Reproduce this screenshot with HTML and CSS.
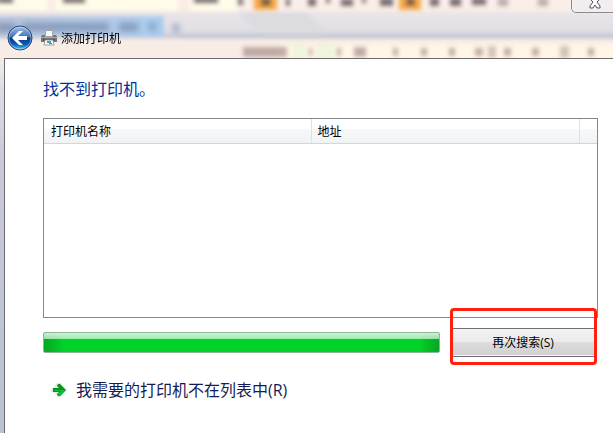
FILE: index.html
```
<!DOCTYPE html>
<html lang="zh-CN">
<head>
    <meta charset="UTF-8">
    <title>添加打印机</title>
    <link rel="stylesheet" href="styles.css">
</head>
<body>
    <div class="window">
        <!-- blurred desktop behind the glass frame -->
        <svg class="glass" viewBox="0 0 613 58" preserveAspectRatio="none" aria-hidden="true">
            <defs>
                <filter id="soft" x="-5%" y="-40%" width="110%" height="180%"><feGaussianBlur stdDeviation="2"/></filter>
                <filter id="softer" x="-5%" y="-60%" width="110%" height="220%"><feGaussianBlur stdDeviation="3"/></filter>
                <linearGradient id="band" x1="0" y1="0" x2="0" y2="1">
                    <stop offset="0" stop-color="#e9e4e6"/>
                    <stop offset="0.75" stop-color="#e1dfe6"/>
                    <stop offset="1" stop-color="#b7becb"/>
                </linearGradient>
                <linearGradient id="tab" x1="0" y1="0" x2="1" y2="0">
                    <stop offset="0" stop-color="#b9c6dc"/>
                    <stop offset="0.6" stop-color="#b4cbe6"/>
                    <stop offset="1" stop-color="#a8cdef"/>
                </linearGradient>
            </defs>
            <rect width="613" height="58" fill="#f8ece6"/>
            <g filter="url(#soft)">
                <rect x="-10" y="-10" width="640" height="21" fill="#faeee8"/>
                <rect x="-10" y="-8" width="57" height="19" fill="#fffbe9"/>
                <rect x="56" y="-8" width="122" height="19" fill="#fffce9"/>
                <rect x="190" y="-8" width="48" height="19" fill="#fffbe9"/>
                <rect x="-10" y="12" width="640" height="26" fill="url(#band)"/>
                <path d="M238 12h68l24 24h-68z" fill="#dcdbe0"/>
                <rect x="-10" y="16" width="174" height="21" fill="url(#tab)"/>
                <rect x="180" y="35" width="440" height="3" fill="#b2bbca"/>
                <rect x="280" y="44" width="345" height="16" fill="#fff6e6"/>
                <rect x="292" y="44" width="14" height="14" fill="#eef5dc"/>
                <rect x="316" y="44" width="18" height="14" fill="#eef5dc"/>
            </g>
            <g filter="url(#softer)" fill="#6f83a8" opacity="0.7">
                <rect x="-4" y="23" width="20" height="9"/>
                <rect x="22" y="23" width="87" height="8"/>
                <rect x="119" y="23" width="19" height="8"/>
                <rect x="149" y="23" width="7" height="7"/>
                <rect x="173" y="24" width="6" height="8"/>
            </g>
            <g filter="url(#soft)">
                <rect x="254" y="-6" width="23" height="16" fill="#f6a947"/>
                <rect x="399" y="-6" width="22" height="16" fill="#f6a947"/>
                <g fill="#50484c" opacity="0.75">
                    <rect x="-2" y="-3" width="15" height="6"/>
                    <rect x="63" y="-3" width="22" height="6"/>
                    <rect x="194" y="-3" width="24" height="6"/>
                    <rect x="238" y="-2" width="5" height="7"/>
                    <rect x="261" y="-2" width="10" height="8"/>
                    <rect x="286" y="-2" width="4" height="8"/>
                    <rect x="308" y="-2" width="8" height="8"/>
                    <rect x="326" y="-2" width="4" height="5"/>
                    <rect x="341" y="-1" width="12" height="7"/>
                    <rect x="362" y="-2" width="4" height="5"/>
                    <rect x="380" y="-2" width="13" height="8"/>
                    <rect x="406" y="-2" width="9" height="8"/>
                    <rect x="430" y="-2" width="9" height="8"/>
                    <rect x="450" y="-2" width="11" height="8"/>
                    <rect x="472" y="-2" width="14" height="7"/>
                    <rect x="498" y="-2" width="10" height="8" opacity="0.5"/>
                    <rect x="538" y="-2" width="10" height="8" opacity="0.5"/>
                </g>
                <g fill="#a88e8a" opacity="0.7">
                    <rect x="243" y="47" width="44" height="10"/>
                    <rect x="354" y="47" width="12" height="10"/>
                    <rect x="309" y="48" width="3" height="8"/>
                    <rect x="337" y="48" width="4" height="8"/>
                    <rect x="393" y="48" width="5" height="8"/>
                    <rect x="421" y="48" width="6" height="8"/>
                    <rect x="449" y="48" width="6" height="8"/>
                    <rect x="475" y="48" width="8" height="8"/>
                    <rect x="488" y="46" width="8" height="12" opacity="0.7"/>
                    <rect x="504" y="48" width="7" height="8"/>
                    <rect x="532" y="48" width="7" height="8"/>
                    <rect x="560" y="46" width="9" height="12" opacity="0.7"/>
                    <rect x="588" y="48" width="6" height="8"/>
                </g>
            </g>
        </svg>
        <button class="close" type="button" aria-label="关闭">
            <svg width="14" height="14" viewBox="0 0 14 14">
                <path d="M2 1h3l2 3 2-3h3v2L9 6l3 4v2H9L7 9l-2 3H2v-2l3-4-3-3z" fill="#fff" stroke="#4d5468"/>
            </svg>
        </button>

        <header class="titlebar">
            <button class="back" type="button" aria-label="返回">
                <svg width="26" height="26" viewBox="0 0 26 26">
                    <defs>
                        <linearGradient id="orb" x1="0" y1="0" x2="0" y2="1">
                            <stop offset="0" stop-color="#a9c4e4"/>
                            <stop offset="0.45" stop-color="#3d73bb"/>
                            <stop offset="0.5" stop-color="#073a8c"/>
                            <stop offset="0.75" stop-color="#0a58b4"/>
                            <stop offset="1" stop-color="#44d8fb"/>
                        </linearGradient>
                    </defs>
                    <circle cx="13" cy="13" r="12" fill="url(#orb)" stroke="#263e6e"/>
                    <circle cx="13" cy="13" r="11" fill="none" stroke="#d4e6f8" opacity="0.5"/>
                    <path d="M5 13l7-7h4l-5 5h9v4h-9l5 5h-4z" fill="#fff"/>
                </svg>
            </button>
            <svg class="printer" width="16" height="16" viewBox="0 0 16 16" aria-hidden="true">
                <path d="M4.500.5h7v6h-7z" fill="#f7f8f8" stroke="#a5a5a5"/>
                <path d="M1 5h3v2h8V5h3l1 2v5H0V7z" fill="#737776"/>
                <path d="M0 7h16v1H0z" fill="#a3a7a6"/>
                <path d="M2 9h12v2H2z" fill="#4b4f4e"/>
                <path d="M4 10h8l1 5H3z" fill="#fff" stroke="#9a9e9d"/>
                <path d="M6 11h4v2H6z" fill="#35a7c9"/>
                <path d="M8 13h3v1H8z" fill="#3e9b79"/>
            </svg>
            <span>添加打印机</span>
        </header>

        <main class="content">
            <h1>找不到打印机。</h1>

            <div class="list">
                <table>
                    <thead>
                        <tr>
                            <th class="col-name">打印机名称</th>
                            <th>地址</th>
                            <th class="col-end"></th>
                        </tr>
                    </thead>
                </table>
            </div>

            <div class="search-row">
                <div class="progress" role="progressbar" aria-label="搜索进度" aria-valuenow="100"></div>
                <div class="search">
                    <button class="search-button" type="button">再次搜索(S)</button>
                    <div class="highlight"></div>
                </div>
            </div>

            <a class="not-listed" href="#">
                <svg width="16" height="16" viewBox="0 0 16 16" aria-hidden="true">
                    <path d="M0 7l3-2 3-4h4l6 7-6 7H6l-2-4-4-1z" fill="#e3e8e4"/>
                    <path d="M2 6h6L6 4l1-2h2l6 6-6 6H7l-1-2 2-2H2z" fill="#07931c"/>
                    <path d="M3 8h11l-5 5H8l-1-1 3-3H3z" fill="#0cc537"/>
                </svg>
                <span>我需要的打印机不在列表中(R)</span>
            </a>
        </main>
    </div>
</body>
</html>
```

FILE: styles.css
```
* {
    box-sizing: border-box;
}
body {
    margin: 0;
    font-family: "Open Sans", "Noto Sans CJK SC", sans-serif;
    font-size: 12px;
    color: #000;
}
button {
    font-family: inherit;
}
.window {
    position: relative;
    display: flex;
    flex-direction: column;
    min-height: 100vh;
    padding-left: 4px;
    overflow: hidden;
    background: linear-gradient(#f3ebe9 58px, #dcdce6 90px, #c9cad8 160px, #b9c1d2);
}
.glass {
    position: absolute;
    top: 0;
    left: 0;
    width: 100%;
    height: 58px;
}
.close {
    position: absolute;
    top: -8px;
    right: -6px;
    width: 48px;
    height: 21px;
    padding: 1px 0 0;
    border: 1px solid #8d8b91;
    border-radius: 0 0 0 5px;
    background: rgba(240, 237, 240, 0.8);
    line-height: 0;
}
.titlebar {
    position: relative;
    display: flex;
    align-items: center;
    height: 58px;
    padding: 18px 3px 0;
}
.back {
    width: 26px;
    height: 26px;
    padding: 0;
    border: none;
    background: none;
    line-height: 0;
}
.printer {
    margin: 0 4px 0 8px;
}
.content {
    position: relative;
    flex: 1;
    padding: 19px 15px 20px 38px;
    border-top: 1px solid #6d6b70;
    border-left: 1px solid #6d6b70;
    background: #fff;
}
h1 {
    margin: 0 0 18px;
    font-size: 16px;
    font-weight: normal;
    line-height: 22px;
    color: #003399;
}
.list {
    height: 200px;
    border: 1px solid #828790;
}
table {
    width: 100%;
    table-layout: fixed;
    border-collapse: collapse;
}
th {
    height: 24px;
    padding: 0 6px;
    border-right: 1px solid #dfe1e4;
    border-bottom: 1px solid #d5d5d5;
    background: linear-gradient(#fff 42%, #f7f8fa 43%, #f1f2f4);
    font-weight: normal;
    text-align: left;
}
.col-name {
    width: 267px;
    padding-left: 7px;
}
.col-end {
    width: 18px;
    border-right: none;
}
.search-row {
    display: flex;
    align-items: center;
    gap: 11px;
    margin-top: 10px;
    padding-right: 1px;
}
.progress {
    flex: 1;
    height: 21px;
    border: 1px solid #8fb496;
    border-radius: 2px;
    background:
        linear-gradient(rgba(255, 255, 255, 0.8), rgba(255, 255, 255, 0.6) 32%, transparent 33%),
        linear-gradient(90deg, #08a524, #00d328 20px, #00d328 calc(100% - 20px), #08a524);
}
.search {
    position: relative;
    width: 146px;
}
.search-button {
    display: block;
    width: 100%;
    height: 29px;
    padding: 0 2px 2px 0;
    border: 1px solid #707070;
    background: linear-gradient(#f2f2f2, #ebebeb 48%, #dddddd 50%, #cfcfcf);
    box-shadow: inset 0 0 0 1px #f6f6f6;
    font-size: 12px;
    color: #000;
}
.highlight {
    position: absolute;
    top: -20px;
    right: 0;
    bottom: -8px;
    left: -1px;
    border: 3px solid #ff2010;
    border-radius: 4px;
    pointer-events: none;
}
.not-listed {
    display: flex;
    align-items: center;
    gap: 9px;
    margin-top: 22px;
    padding-left: 8px;
    font-size: 16px;
    line-height: 22px;
    color: #151c55;
    text-decoration: none;
}
```
